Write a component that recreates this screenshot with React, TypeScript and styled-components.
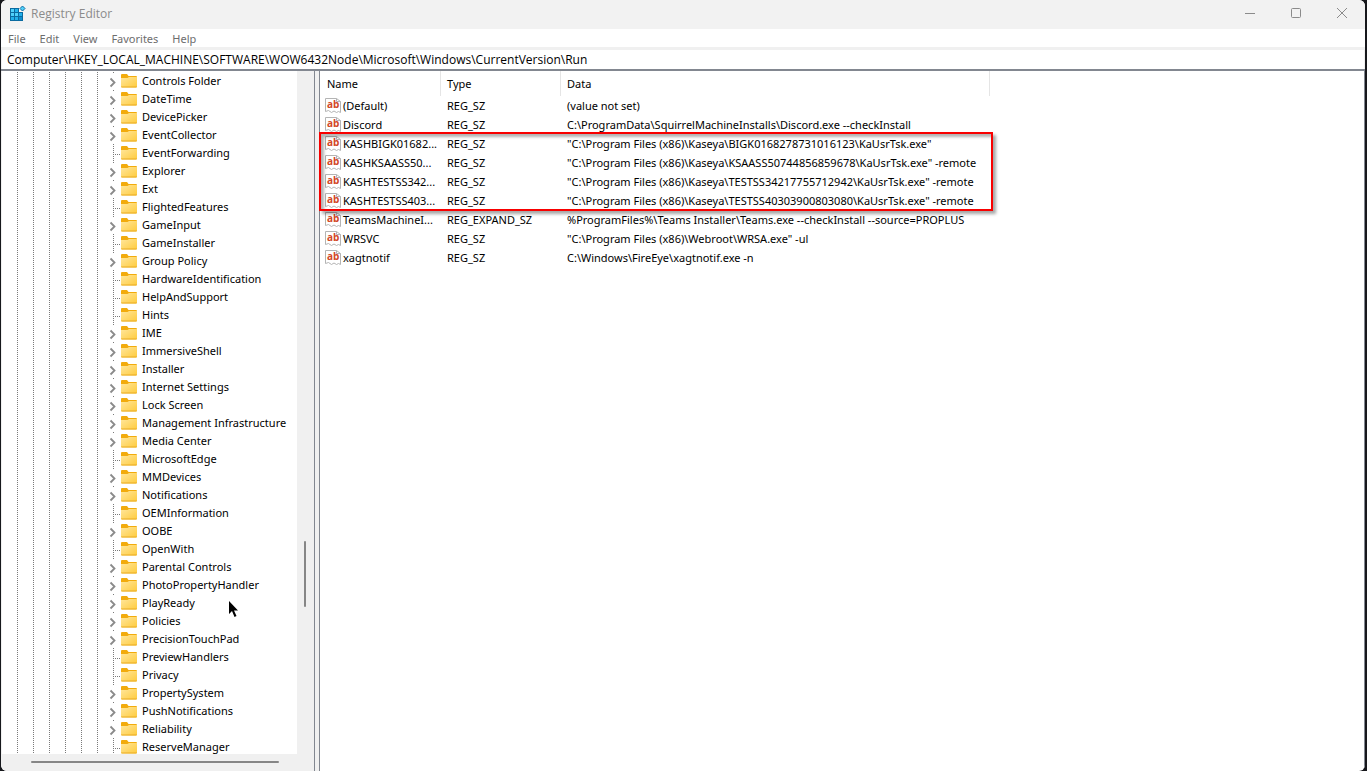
import React, { useState } from "react";
import styled, { createGlobalStyle } from "styled-components";

const edge = "#828790";
const face = "#f0f0f0";

const Global = createGlobalStyle`
  * { box-sizing: border-box; }
  html, body, #root { height: 100%; }
  body {
    margin: 0;
    overflow: hidden;
    background: #17181c;
    color: #000;
    font: 11px/18px "Noto Sans", "Liberation Sans", sans-serif;
  }
  button, input { font: inherit; color: inherit; }
`;

const Window = styled.div`
  height: 100vh;
  padding: 0 2px 0 1px;
`;

const Frame = styled.div`
  height: 100%;
  display: flex;
  flex-direction: column;
  overflow: hidden;
  background: #fff;
  border-radius: 6px;
`;

const TitleBar = styled.header`
  display: flex;
  align-items: flex-start;
  height: 29px;
  flex: none;
  padding: 0 0 0 8px;
  background: #f2f2f2;
  color: #8b8b8b;
`;

const AppIcon = styled.span`
  padding-top: 6px;
`;

const Title = styled.h1`
  flex: 1;
  margin: 0 0 0 5px;
  font-size: 12px;
  line-height: 28px;
  font-weight: 400;
  font-family: "Open Sans", "Liberation Sans", sans-serif;
`;

const CaptionButton = styled.button`
  display: grid;
  place-items: center;
  width: 46px;
  height: 26px;
  padding: 0;
  border: 0;
  background: none;
  color: #8b8b8b;
`;

const MenuBar = styled.nav`
  display: flex;
  gap: 14px;
  height: 18px;
  flex: none;
  padding-left: 7px;
`;

const MenuItem = styled.button`
  padding: 0;
  border: 0;
  background: none;
  line-height: 20px;
  color: #6d6d6d;
`;

const AddressBar = styled.div`
  flex: none;
  padding: 3px 1px 0;
  background: ${face};
  border-bottom: 2px solid ${edge};
`;

const AddressInput = styled.input`
  display: block;
  width: 100%;
  height: 19px;
  padding: 0 5px;
  border: 0;
  outline: 0;
  background: #fff;
  font-size: 12px;
  font-family: "Open Sans", "Liberation Sans", sans-serif;
`;

const Panes = styled.main`
  flex: 1;
  min-height: 0;
  display: flex;
`;

const TreePane = styled.section`
  display: grid;
  grid-template: minmax(0, 1fr) 17px / 1fr 17px;
  width: 314px;
  flex: none;
  padding-left: 1px;
  background: ${face};
  border-right: 1px solid ${edge};
`;

const Tree = styled.ul`
  margin: 0;
  padding: 1px 0 0 8px;
  list-style: none;
  overflow: hidden;
  background: #fff;
`;

const TreeItem = styled.li`
  display: flex;
  align-items: center;
  height: 18px;
`;

const GuideLines = styled.svg`
  flex: none;
  margin-left: 7px;
  stroke: #7a7a7a;
  stroke-dasharray: 1 1;
  shape-rendering: crispEdges;
`;

const Toggle = styled.button`
  flex: none;
  width: 16px;
  height: 18px;
  padding: 0;
  border: 0;
  background: none;
`;

const Block = styled.svg`
  display: block;
  flex: none;
`;

const KeyName = styled.span`
  margin-left: 5px;
  white-space: nowrap;
`;

const VScroll = styled.div`
  padding: 470px 0 0 7px;
`;

const HScroll = styled.div`
  padding: 7px 0 0 29px;
`;

const Thumb = styled.div<{ $vertical?: boolean }>`
  width: ${(p) => (p.$vertical ? "2px" : "248px")};
  height: ${(p) => (p.$vertical ? "66px" : "2px")};
  border-radius: 1px;
  background: #868686;
`;

const Splitter = styled.div`
  width: 4px;
  flex: none;
  background: ${face};
`;

const ListPane = styled.section`
  position: relative;
  flex: 1;
  min-width: 0;
  padding-left: 1px;
  border-left: 1px solid ${edge};
  border-right: 1px solid ${edge};
`;

const ValueTable = styled.table`
  table-layout: fixed;
  width: 669px;
  border-collapse: separate;
  border-spacing: 0;
`;

const HeadCell = styled.th<{ $width: number }>`
  width: ${(p) => p.$width}px;
  height: 25px;
  padding: 0 0 0 6px;
  border-right: 1px solid #e5e5e5;
  text-align: left;
  font-weight: 400;
`;

const Cell = styled.td`
  height: 19px;
  padding: 0 0 0 6px;
  white-space: nowrap;
  line-height: 19px;
`;

const NameCell = styled(Cell)`
  padding-left: 4px;
`;

const NameContent = styled.span`
  display: flex;
  align-items: center;
  gap: 2px;
`;

const Highlight = styled.div`
  position: absolute;
  top: 61px;
  left: -1px;
  width: 674px;
  height: 79px;
  border: 2px solid #f80000;
  box-shadow: 3px 3px 3px rgba(0, 0, 0, 0.35), inset 3px 3px 3px rgba(0, 0, 0, 0.3);
  pointer-events: none;
`;

const Pointer = styled.svg`
  position: fixed;
  top: 600px;
  left: 228px;
  pointer-events: none;
`;

const keys: [string, boolean][] = [
  ["Controls Folder", true],
  ["DateTime", true],
  ["DevicePicker", true],
  ["EventCollector", true],
  ["EventForwarding", false],
  ["Explorer", true],
  ["Ext", true],
  ["FlightedFeatures", false],
  ["GameInput", true],
  ["GameInstaller", false],
  ["Group Policy", true],
  ["HardwareIdentification", false],
  ["HelpAndSupport", false],
  ["Hints", false],
  ["IME", true],
  ["ImmersiveShell", true],
  ["Installer", true],
  ["Internet Settings", true],
  ["Lock Screen", true],
  ["Management Infrastructure", true],
  ["Media Center", true],
  ["MicrosoftEdge", false],
  ["MMDevices", true],
  ["Notifications", true],
  ["OEMInformation", false],
  ["OOBE", true],
  ["OpenWith", false],
  ["Parental Controls", true],
  ["PhotoPropertyHandler", true],
  ["PlayReady", true],
  ["Policies", true],
  ["PrecisionTouchPad", true],
  ["PreviewHandlers", false],
  ["Privacy", false],
  ["PropertySystem", true],
  ["PushNotifications", true],
  ["Reliability", true],
  ["ReserveManager", false],
];

const values: [string, string, string][] = [
  ["(Default)", "REG_SZ", "(value not set)"],
  ["Discord", "REG_SZ", "C:\\ProgramData\\SquirrelMachineInstalls\\Discord.exe --checkInstall"],
  ["KASHBIGK01682...", "REG_SZ", '"C:\\Program Files (x86)\\Kaseya\\BIGK0168278731016123\\KaUsrTsk.exe"'],
  ["KASHKSAASS50...", "REG_SZ", '"C:\\Program Files (x86)\\Kaseya\\KSAASS50744856859678\\KaUsrTsk.exe" -remote'],
  ["KASHTESTSS342...", "REG_SZ", '"C:\\Program Files (x86)\\Kaseya\\TESTSS34217755712942\\KaUsrTsk.exe" -remote'],
  ["KASHTESTSS403...", "REG_SZ", '"C:\\Program Files (x86)\\Kaseya\\TESTSS40303900803080\\KaUsrTsk.exe" -remote'],
  ["TeamsMachineI...", "REG_EXPAND_SZ", "%ProgramFiles%\\Teams Installer\\Teams.exe --checkInstall --source=PROPLUS"],
  ["WRSVC", "REG_SZ", '"C:\\Program Files (x86)\\Webroot\\WRSA.exe" -ul'],
  ["xagtnotif", "REG_SZ", "C:\\Windows\\FireEye\\xagtnotif.exe -n"],
];

const RegistryIcon = () => (
  <Block width="17" height="16" viewBox="0 0 17 16" aria-hidden="true">
    <path d="M1 2h9v4h4v9H1z" fill="#0a6ba0" />
    <path d="M2 3h3v3H2zM2 7h3v3H2zM6 7h3v3H6z" fill="#4fd0fb" />
    <path d="M6 3h3v3H6zM10 7h3v3h-3zM2 11h3v3H2zM6 11h3v3H6z" fill="#22b0ea" />
    <path d="M10 11h3v3h-3z" fill="#0f8fd0" />
    <path d="M13.500 0L16 2.500 13.500 5 11 2.500z" fill="#4fd0fb" stroke="#0a6ba0" />
  </Block>
);

const FolderIcon = () => (
  <Block width="16" height="14" viewBox="0 0 16 14" aria-hidden="true">
    <defs>
      <linearGradient id="folder" x1="0" y1="0" x2="1" y2="1">
        <stop offset="0" stopColor="#ffe69b" />
        <stop offset="1" stopColor="#ffcb3d" />
      </linearGradient>
    </defs>
    <path d="M0 1q0-1 1-1h5l1.500 2H15q1 0 1 1v3H0z" fill="#f2ab0c" />
    <path d="M0 4h6.500L8 3h8v9.500q0 1-1 1H1q-1 0-1-1z" fill="url(#folder)" />
    <path d="M0 12.500h16q0 1-1 1H1q-1 0-1-1z" fill="#e9ab25" />
  </Block>
);

const StringIcon = () => (
  <Block width="16" height="17" viewBox="0 0 16 17" aria-hidden="true">
    <path d="M.5 1.500h11l4 3v11l-2-1-2 1-2.500-1.500-2.500 1.500-3-2-3 1z" fill="#fff" stroke="#b4b4b4" />
    <path d="M11.500 1.500v3h4" fill="none" stroke="#b4b4b4" />
    <text x="2" y="10.500" fontSize="10" fontWeight="700" fontFamily="Open Sans" fill="#d24726">ab</text>
  </Block>
);

const guides = [0, 1, 2, 3, 4, 5].map((i) => i * 16 + 0.5);

function TreeRow({ name, hasChildren }: { name: string; hasChildren: boolean }) {
  return (
    <TreeItem>
      <GuideLines width="88" height="18" aria-hidden="true">
        {guides.map((x) => (
          <line key={x} x1={x} x2={x} y1="0" y2="18" />
        ))}
      </GuideLines>
      {hasChildren ? (
        <Toggle aria-label={`Expand ${name}`}>
          <Block width="16" height="18" aria-hidden="true">
            <path d="M5.500 6.500l4 4-4 4" fill="none" stroke="#8a8a8a" strokeWidth="1.800" />
            <path d="M8 0h1v1H8z" fill="#7a7a7a" />
          </Block>
        </Toggle>
      ) : (
        <Block width="16" height="18" aria-hidden="true" stroke="#7a7a7a" strokeDasharray="1 1" shapeRendering="crispEdges">
          <line x1="8.500" x2="8.500" y1="0" y2="18" />
          <line x1="8" x2="15" y1="10.500" y2="10.500" />
        </Block>
      )}
      <FolderIcon />
      <KeyName>{name}</KeyName>
    </TreeItem>
  );
}

export default function App() {
  const [path, setPath] = useState(
    "Computer\\HKEY_LOCAL_MACHINE\\SOFTWARE\\WOW6432Node\\Microsoft\\Windows\\CurrentVersion\\Run"
  );
  return (
    <Window>
      <Global />
      <Frame>
        <TitleBar>
          <AppIcon><RegistryIcon /></AppIcon>
          <Title>Registry Editor</Title>
          <CaptionButton aria-label="Minimize">
            <svg width="10" height="10" stroke="currentColor"><path d="M0 5.500h10" /></svg>
          </CaptionButton>
          <CaptionButton aria-label="Maximize">
            <svg width="10" height="10" stroke="currentColor" fill="none"><rect x=".5" y=".5" width="9" height="9" rx="1" /></svg>
          </CaptionButton>
          <CaptionButton aria-label="Close">
            <svg width="10" height="10" stroke="currentColor"><path d="M0 0l10 10M10 0L0 10" /></svg>
          </CaptionButton>
        </TitleBar>
        <MenuBar>
          {["File", "Edit", "View", "Favorites", "Help"].map((m) => (
            <MenuItem key={m}>{m}</MenuItem>
          ))}
        </MenuBar>
        <AddressBar>
          <AddressInput aria-label="Address" value={path} onChange={(e) => setPath(e.target.value)} />
        </AddressBar>
        <Panes>
          <TreePane>
            <Tree>
              {keys.map(([name, hasChildren]) => (
                <TreeRow key={name} name={name} hasChildren={hasChildren} />
              ))}
            </Tree>
            <VScroll><Thumb $vertical /></VScroll>
            <HScroll><Thumb /></HScroll>
          </TreePane>
          <Splitter />
          <ListPane>
            <ValueTable>
              <thead>
                <tr>
                  <HeadCell $width={120}>Name</HeadCell>
                  <HeadCell $width={120}>Type</HeadCell>
                  <HeadCell $width={429}>Data</HeadCell>
                </tr>
              </thead>
              <tbody>
                {values.map(([name, type, data]) => (
                  <tr key={name}>
                    <NameCell><NameContent><StringIcon />{name}</NameContent></NameCell>
                    <Cell>{type}</Cell>
                    <Cell>{data}</Cell>
                  </tr>
                ))}
              </tbody>
            </ValueTable>
            <Highlight />
          </ListPane>
        </Panes>
      </Frame>
      <Pointer width="12" height="18" viewBox="0 0 12 18" aria-hidden="true">
        <path d="M1 1v13l3-3 2.500 6 2-1L6 10.500h4z" fill="#000" />
      </Pointer>
    </Window>
  );
}
